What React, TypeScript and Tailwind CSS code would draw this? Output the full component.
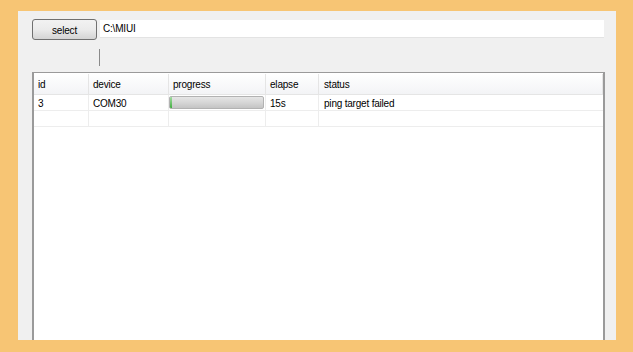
import React from "react";

type Row = { id: string; device: string; progress: number | null; elapse: string; status: string };

const rows: Row[] = [
  { id: "3", device: "COM30", progress: 2, elapse: "15s", status: "ping target failed" },
  { id: "", device: "", progress: null, elapse: "", status: "" },
];

const cols = [
  { key: "id", label: "id", w: "w-[55px] pl-[4px]" },
  { key: "device", label: "device", w: "w-[80px] pl-[4px]" },
  { key: "progress", label: "progress", w: "w-[97px] pl-[4px]" },
  { key: "elapse", label: "elapse", w: "w-[53px] pl-[4px]" },
  { key: "status", label: "status", w: "flex-1 pl-[5px]" },
];

function ProgressBar({ value }: { value: number }) {
  return (
    <div className="relative h-[13px] w-[95px] rounded-[2px] border border-[#b2b2b2] bg-gradient-to-b from-[#e6e6e6] via-[#d6d6d6] to-[#c4c4c4] overflow-hidden">
      <div
        className="h-full bg-gradient-to-b from-[#9fdc9f] to-[#3fae3f]"
        style={{ width: `${value}%` }}
      />
    </div>
  );
}

export default function App() {
  return (
    <div
      className="w-[633px] h-[352px] bg-[#f7c574] pt-[11px] pl-[18px] pr-[17px] text-[10px] tracking-[-0.2px] text-black"
      style={{ fontFamily: '"Liberation Sans", Arial, sans-serif' }}
    >
      <div className="h-[329px] bg-[#f0f0f0] flex flex-col pl-[14px]">
        {/* path picker */}
        <div className="flex items-start mt-[8px] gap-[3px]">
          <button className="w-[65px] h-[21px] pt-[2px] rounded-[3px] border border-[#707070] bg-gradient-to-b from-[#f2f2f2] via-[#ebebeb] to-[#d4d4d4] leading-none">
            select
          </button>
          <div className="mt-[1px] w-[504px] h-[18px] bg-white border-b border-[#e3e3e3] pl-[3px] flex items-center">
            C:\MIUI
          </div>
        </div>

        {/* thin separator */}
        <div className="ml-[67px] mt-[9px] h-[17px] w-px bg-[#8a8a8a]" />

        {/* list view */}
        <div className="mt-[6px] w-[573px] flex-1 bg-white border-t border-l-2 border-r-2 border-[#9a9a9a] flex flex-col">
          <div className="flex h-[22px] pt-[1px] bg-gradient-to-b from-white to-[#f3f4f6] border-b border-[#e5e5e5]">
            {cols.map((c) => (
              <div key={c.key} className={`${c.w} flex items-center border-r border-[#e5e5e5]`}>
                {c.label}
              </div>
            ))}
          </div>
          {rows.map((r, i) => (
            <div key={i} className="flex h-[16px] border-b border-[#ededed]">
              <div className="w-[55px] pl-[4px] pt-[1px] border-r border-[#ededed] flex items-center">{r.id}</div>
              <div className="w-[80px] pl-[4px] pt-[1px] border-r border-[#ededed] flex items-center">{r.device}</div>
              <div className="w-[97px] border-r border-[#ededed] flex items-center">
                {r.progress !== null && <ProgressBar value={r.progress} />}
              </div>
              <div className="w-[53px] pl-[4px] pt-[1px] border-r border-[#ededed] flex items-center">{r.elapse}</div>
              <div className="flex-1 pl-[5px] pt-[1px] flex items-center">{r.status}</div>
            </div>
          ))}
        </div>
      </div>
    </div>
  );
}
